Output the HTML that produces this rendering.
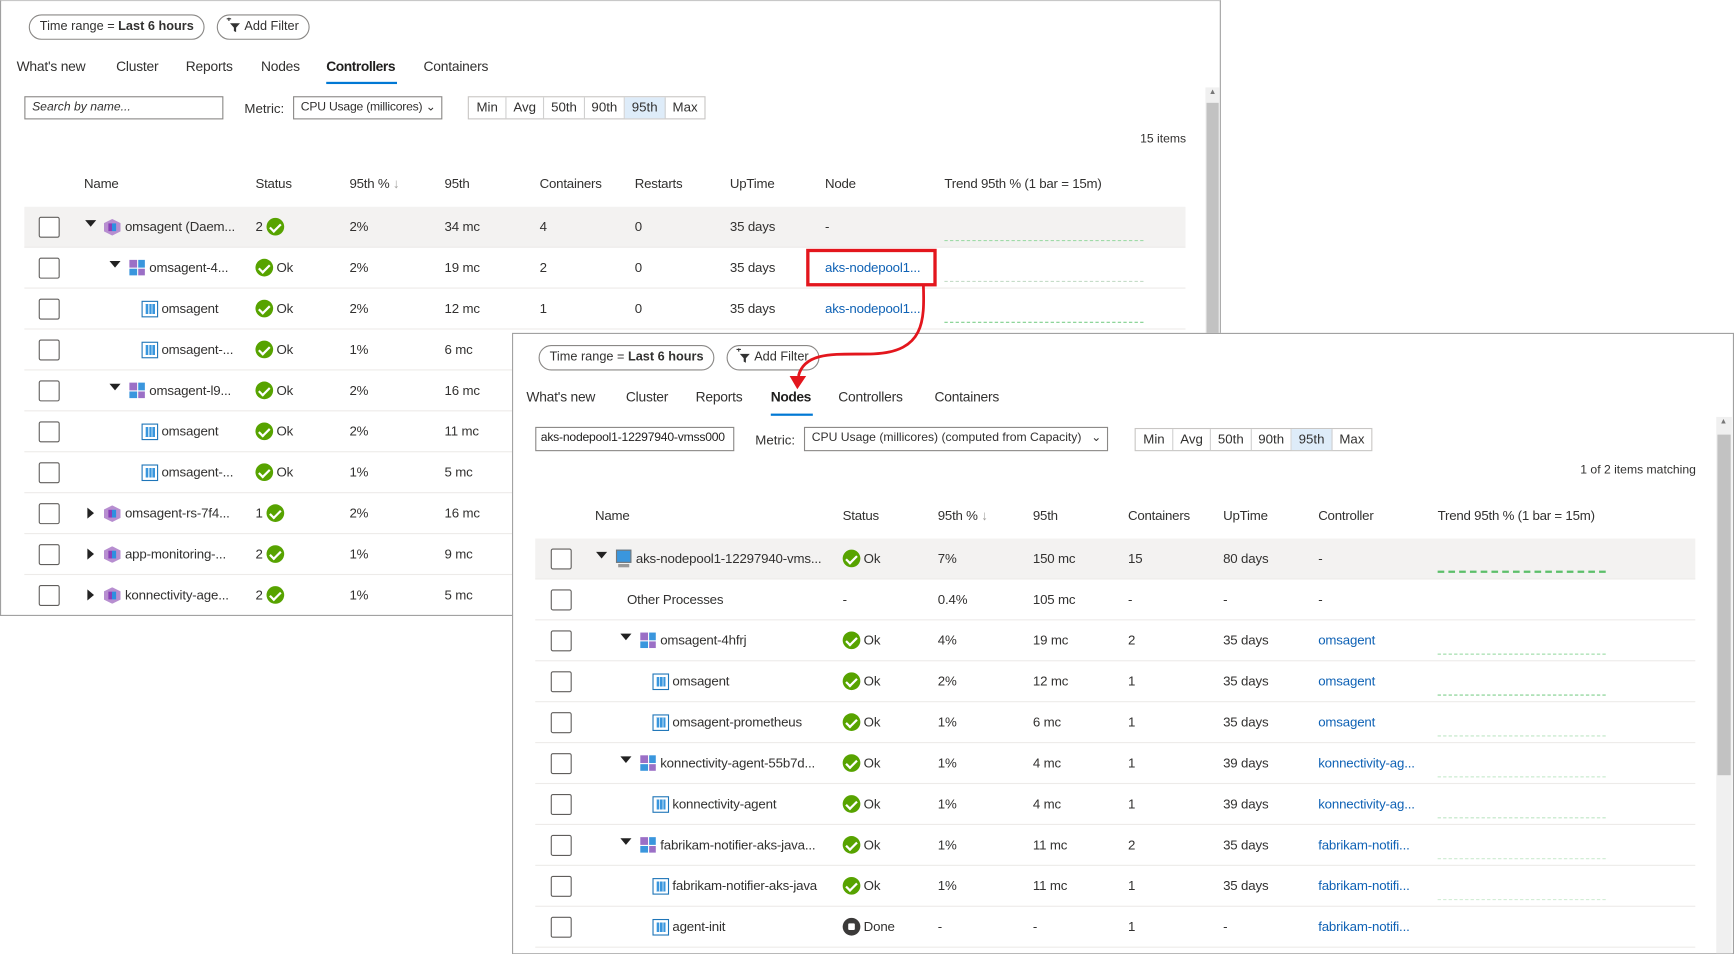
<!DOCTYPE html>
<html><head><meta charset="utf-8"><style>
*{box-sizing:border-box;margin:0;padding:0}
body{width:1734px;height:954px;background:#fff;overflow:hidden;font-family:"Liberation Sans",sans-serif;color:#323130;font-size:12px}
#w{position:absolute;left:0;top:0;width:1568px;height:863px;transform:scale(1.10587);transform-origin:0 0}
.p{position:absolute;background:#fff;border:1px solid #a0a0a0;overflow:hidden}
.a{position:absolute;white-space:nowrap}
.pill{position:absolute;height:23px;border:1px solid #8a8886;border-radius:12px;line-height:21px;font-size:11.5px;padding:0 9px}
.tab{position:absolute;font-size:12.5px;white-space:nowrap;letter-spacing:-0.2px}
.ul{position:absolute;height:2px;background:#0078d4}
.box{position:absolute;height:21px;border:1px solid #8a8886;font-size:11px;line-height:19px;padding:0 6px;white-space:nowrap;overflow:hidden}
.seg{position:absolute;height:21px;border:1px solid #c8c6c4;display:flex;font-size:12px}
.seg span{border-right:1px solid #d0d0d0;line-height:19px;text-align:center}
.seg span:last-child{border-right:none}
.hd{position:absolute;font-size:12px;font-weight:normal;color:#323130;letter-spacing:-0.2px}
.row{position:absolute;height:37px;border-bottom:1px solid #edebe9;letter-spacing:-0.15px}
.row .a{top:11px}
.cb{position:absolute;top:9px;width:19px;height:19px;border:1px solid #605e5c;border-radius:2px;background:#fff}
.tri{position:absolute;top:12px;width:0;height:0;border-left:5px solid transparent;border-right:5px solid transparent;border-top:6px solid #222}
.trir{position:absolute;top:8px;width:0;height:0;border-top:5px solid transparent;border-bottom:5px solid transparent;border-left:6px solid #222}
.ok{display:inline-block;width:16px;height:16px;border-radius:50%;background:#57a300;vertical-align:-4px;position:relative;margin-right:3px}
.ok:after{content:"";position:absolute;left:5px;top:2.5px;width:4px;height:8px;border:solid #fff;border-width:0 2px 2px 0;transform:rotate(45deg)}
.done{display:inline-block;width:16px;height:16px;border-radius:50%;background:#3b3a39;vertical-align:-4px;position:relative;margin-right:3px}
.done:after{content:"";position:absolute;left:5px;top:5px;width:6px;height:6px;background:#fff;border-radius:1px}
.ct{position:absolute;top:11px;width:15px;height:15px;background:#3a96dd;border:1px solid #1e75b8;background-image:repeating-linear-gradient(90deg,#3a96dd 0 2px,#bfe0f7 2px 3px);background-clip:content-box;padding:2px}
.rs{position:absolute;top:11px;width:14px;height:14px;display:grid;grid-template-columns:1fr 1fr;gap:1px}
.rs i{display:block}
.ds{position:absolute;top:11px;width:15px;height:15px;background:#b78ed0;clip-path:polygon(50% 0,100% 25%,100% 75%,50% 100%,0 75%,0 25%)}
.ds:after{content:"";position:absolute;left:4px;top:4px;width:7px;height:7px;background:linear-gradient(90deg,#8a3fb8 50%,#2d8fe0 50%)}
.tr{position:absolute;top:30px;height:0;border-top:1px dashed #9fdba8}
.trb{border-top:2px dashed #5cbf6a}
.lk{color:#0f62b5}
.sb{position:absolute;background:#f0f0f0}
.th{position:absolute;background:#c2c2c2}
.fi{display:inline-block;vertical-align:-3px;margin-right:3px}
</style></head><body><div id="w">

<!-- Panel 1 -->
<div class="p" style="left:0;top:0;width:1104px;height:557px;border-top-color:#c8c8c8">
 <div class="pill" style="left:25px;top:12px">Time range = <b>Last 6 hours</b></div>
 <div class="pill" style="left:195px;top:12px;padding-left:7px"><svg class="fi" width="14" height="14" viewBox="0 0 14 14"><path d="M1 1h4M3 -1v4" stroke="#333" stroke-width="1"/><path d="M4 5h9l-3.5 4v4l-2-1v-3z" fill="#333"/></svg>Add Filter</div>
 <div class="tab" style="left:14px;top:52px">What's new</div>
 <div class="tab" style="left:104px;top:52px">Cluster</div>
 <div class="tab" style="left:167px;top:52px">Reports</div>
 <div class="tab" style="left:235px;top:52px">Nodes</div>
 <div class="tab" style="left:294px;top:52px;font-weight:bold;color:#201f1e;letter-spacing:-0.4px">Controllers</div>
 <div class="ul" style="left:294px;top:73px;width:64px"></div>
 <div class="tab" style="left:382px;top:52px">Containers</div>
 <div class="box" style="left:21px;top:86px;width:180px;font-style:italic">Search by name...</div>
 <div class="a" style="left:220px;top:90px">Metric:</div>
 <div class="box" style="left:264px;top:86px;width:135px;letter-spacing:-0.2px">CPU Usage (millicores) <span style="position:absolute;right:5px">⌄</span></div>
 <div class="seg" style="left:422px;top:86px"><span style="width:34px">Min</span><span style="width:34px">Avg</span><span style="width:37px">50th</span><span style="width:36px">90th</span><span style="width:37px;background:#deecf9">95th</span><span style="width:35px">Max</span></div>
 <div class="a" style="left:1030px;top:119px;font-size:11px">15 items</div>
 <div class="hd" style="left:75px;top:158px">Name</div><div class="hd" style="left:230px;top:158px">Status</div><div class="hd" style="left:315px;top:158px">95th % <span style="color:#a19f9d">↓</span></div><div class="hd" style="left:401px;top:158px">95th</div><div class="hd" style="left:487px;top:158px">Containers</div><div class="hd" style="left:573px;top:158px">Restarts</div><div class="hd" style="left:659px;top:158px">UpTime</div><div class="hd" style="left:745px;top:158px">Node</div><div class="hd" style="left:853px;top:158px">Trend 95th % (1 bar = 15m)</div>

 <div class="row" style="left:21px;top:186px;width:1050px;background:#f3f2f1"><div class="cb" style="left:13px"></div><div class="tri" style="left:55px"></div><div class="ds" style="left:72px"></div><span class="a" style="left:91px">omsagent (Daem...</span><span class="a" style="left:209px;top:10px">2 <span class="ok"></span></span><span class="a" style="left:294px">2%</span><span class="a" style="left:380px">34 mc</span><span class="a" style="left:466px">4</span><span class="a" style="left:552px">0</span><span class="a" style="left:638px">35 days</span><span class="a" style="left:724px">-</span><div class="tr" style="left:832px;width:180px"></div></div>
 <div class="row" style="left:21px;top:223px;width:1050px"><div class="cb" style="left:13px"></div><div class="tri" style="left:77px"></div><div class="rs" style="left:95px"><i style="background:#9b6fc6"></i><i style="background:#3a96dd"></i><i style="background:#3a96dd"></i><i style="background:#9b6fc6"></i></div><span class="a" style="left:113px">omsagent-4...</span><span class="a" style="left:209px;top:10px"><span class="ok"></span>Ok</span><span class="a" style="left:294px">2%</span><span class="a" style="left:380px">19 mc</span><span class="a" style="left:466px">2</span><span class="a" style="left:552px">0</span><span class="a" style="left:638px">35 days</span><span class="a lk" style="left:724px">aks-nodepool1...</span><div class="tr" style="left:832px;width:180px;border-top-color:#c5dcc8"></div></div>
 <div class="row" style="left:21px;top:260px;width:1050px"><div class="cb" style="left:13px"></div><div class="ct" style="left:106px"></div><span class="a" style="left:124px">omsagent</span><span class="a" style="left:209px;top:10px"><span class="ok"></span>Ok</span><span class="a" style="left:294px">2%</span><span class="a" style="left:380px">12 mc</span><span class="a" style="left:466px">1</span><span class="a" style="left:552px">0</span><span class="a" style="left:638px">35 days</span><span class="a lk" style="left:724px">aks-nodepool1...</span><div class="tr" style="left:832px;width:180px;border-top-color:#7fcf8c"></div></div>
 <div class="row" style="left:21px;top:297px;width:1050px"><div class="cb" style="left:13px"></div><div class="ct" style="left:106px"></div><span class="a" style="left:124px">omsagent-...</span><span class="a" style="left:209px;top:10px"><span class="ok"></span>Ok</span><span class="a" style="left:294px">1%</span><span class="a" style="left:380px">6 mc</span></div>
 <div class="row" style="left:21px;top:334px;width:1050px"><div class="cb" style="left:13px"></div><div class="tri" style="left:77px"></div><div class="rs" style="left:95px"><i style="background:#9b6fc6"></i><i style="background:#3a96dd"></i><i style="background:#3a96dd"></i><i style="background:#9b6fc6"></i></div><span class="a" style="left:113px">omsagent-l9...</span><span class="a" style="left:209px;top:10px"><span class="ok"></span>Ok</span><span class="a" style="left:294px">2%</span><span class="a" style="left:380px">16 mc</span></div>
 <div class="row" style="left:21px;top:371px;width:1050px"><div class="cb" style="left:13px"></div><div class="ct" style="left:106px"></div><span class="a" style="left:124px">omsagent</span><span class="a" style="left:209px;top:10px"><span class="ok"></span>Ok</span><span class="a" style="left:294px">2%</span><span class="a" style="left:380px">11 mc</span></div>
 <div class="row" style="left:21px;top:408px;width:1050px"><div class="cb" style="left:13px"></div><div class="ct" style="left:106px"></div><span class="a" style="left:124px">omsagent-...</span><span class="a" style="left:209px;top:10px"><span class="ok"></span>Ok</span><span class="a" style="left:294px">1%</span><span class="a" style="left:380px">5 mc</span></div>
 <div class="row" style="left:21px;top:445px;width:1050px"><div class="cb" style="left:13px"></div><div class="trir" style="left:57px;top:13px"></div><div class="ds" style="left:72px"></div><span class="a" style="left:91px">omsagent-rs-7f4...</span><span class="a" style="left:209px;top:10px">1 <span class="ok"></span></span><span class="a" style="left:294px">2%</span><span class="a" style="left:380px">16 mc</span></div>
 <div class="row" style="left:21px;top:482px;width:1050px"><div class="cb" style="left:13px"></div><div class="trir" style="left:57px;top:13px"></div><div class="ds" style="left:72px"></div><span class="a" style="left:91px">app-monitoring-...</span><span class="a" style="left:209px;top:10px">2 <span class="ok"></span></span><span class="a" style="left:294px">1%</span><span class="a" style="left:380px">9 mc</span></div>
 <div class="row" style="left:21px;top:519px;width:1050px;border:none"><div class="cb" style="left:13px"></div><div class="trir" style="left:57px;top:13px"></div><div class="ds" style="left:72px"></div><span class="a" style="left:91px">konnectivity-age...</span><span class="a" style="left:209px;top:10px">2 <span class="ok"></span></span><span class="a" style="left:294px">1%</span><span class="a" style="left:380px">5 mc</span></div>
 <div class="sb" style="left:1089px;top:78px;width:13px;height:480px"></div>
 <div class="th" style="left:1090px;top:92px;width:11px;height:466px"></div>
 <div class="a" style="left:1092px;top:79px;font-size:7px;color:#777">▲</div>
</div>
<div style="position:absolute;left:729px;top:225px;width:118px;height:34px;border:3px solid #e3161d"></div>

<!-- Panel 2 -->
<div class="p" style="left:463px;top:301px;width:1105px;height:562px">
 <div class="pill" style="left:23px;top:10px">Time range = <b>Last 6 hours</b></div>
 <div class="pill" style="left:193px;top:10px;padding-left:7px"><svg class="fi" width="14" height="14" viewBox="0 0 14 14"><path d="M1 1h4M3 -1v4" stroke="#333" stroke-width="1"/><path d="M4 5h9l-3.5 4v4l-2-1v-3z" fill="#333"/></svg>Add Filter</div>
 <div class="tab" style="left:12px;top:50px">What's new</div>
 <div class="tab" style="left:102px;top:50px">Cluster</div>
 <div class="tab" style="left:165px;top:50px">Reports</div>
 <div class="tab" style="left:233px;top:50px;font-weight:bold;color:#201f1e;letter-spacing:-0.4px">Nodes</div>
 <div class="ul" style="left:233px;top:72px;width:38px"></div>
 <div class="tab" style="left:294px;top:50px">Controllers</div>
 <div class="tab" style="left:381px;top:50px">Containers</div>
 <div class="box" style="left:20px;top:84px;width:180px;height:22px;color:#201f1e;letter-spacing:-0.2px;padding:0 4px">aks-nodepool1-12297940-vmss000</div>
 <div class="a" style="left:219px;top:89px">Metric:</div>
 <div class="box" style="left:263px;top:84px;width:275px;height:22px">CPU Usage (millicores) (computed from Capacity) <span style="position:absolute;right:5px">⌄</span></div>
 <div class="seg" style="left:562px;top:85px"><span style="width:34px">Min</span><span style="width:34px">Avg</span><span style="width:37px">50th</span><span style="width:36px">90th</span><span style="width:37px;background:#deecf9">95th</span><span style="width:35px">Max</span></div>
 <div class="a" style="left:965px;top:117px;font-size:11px">1 of 2 items matching</div>
 <div class="hd" style="left:74px;top:157px">Name</div><div class="hd" style="left:298px;top:157px">Status</div><div class="hd" style="left:384px;top:157px">95th % <span style="color:#a19f9d">↓</span></div><div class="hd" style="left:470px;top:157px">95th</div><div class="hd" style="left:556px;top:157px">Containers</div><div class="hd" style="left:642px;top:157px">UpTime</div><div class="hd" style="left:728px;top:157px">Controller</div><div class="hd" style="left:836px;top:157px">Trend 95th % (1 bar = 15m)</div>

 <div class="row" style="left:20px;top:185px;width:1049px;background:#f3f2f1"><div class="cb" style="left:14px"></div><div class="tri" style="left:55px"></div><div class="a" style="left:73px;top:10px;width:14px;height:12px;background:#3a96dd;border:1px solid #777"></div><div class="a" style="left:75px;top:23px;width:10px;height:3px;background:#999"></div><span class="a" style="left:91px">aks-nodepool1-12297940-vms...</span><span class="a" style="left:278px;top:10px"><span class="ok"></span>Ok</span><span class="a" style="left:364px">7%</span><span class="a" style="left:450px">150 mc</span><span class="a" style="left:536px">15</span><span class="a" style="left:622px">80 days</span><span class="a" style="left:708px">-</span><div class="tr trb" style="left:816px;width:152px;top:29px"></div></div>
 <div class="row" style="left:20px;top:222px;width:1049px"><div class="cb" style="left:14px"></div><span class="a" style="left:83px">Other Processes</span><span class="a" style="left:278px">-</span><span class="a" style="left:364px">0.4%</span><span class="a" style="left:450px">105 mc</span><span class="a" style="left:536px">-</span><span class="a" style="left:622px">-</span><span class="a" style="left:708px">-</span></div>
 <div class="row" style="left:20px;top:259px;width:1049px"><div class="cb" style="left:14px"></div><div class="tri" style="left:77px"></div><div class="rs" style="left:95px"><i style="background:#9b6fc6"></i><i style="background:#3a96dd"></i><i style="background:#3a96dd"></i><i style="background:#9b6fc6"></i></div><span class="a" style="left:113px">omsagent-4hfrj</span><span class="a" style="left:278px;top:10px"><span class="ok"></span>Ok</span><span class="a" style="left:364px">4%</span><span class="a" style="left:450px">19 mc</span><span class="a" style="left:536px">2</span><span class="a" style="left:622px">35 days</span><span class="a lk" style="left:708px">omsagent</span><div class="tr" style="left:816px;width:152px;border-top-color:#8fd69a"></div></div>
 <div class="row" style="left:20px;top:296px;width:1049px"><div class="cb" style="left:14px"></div><div class="ct" style="left:106px"></div><span class="a" style="left:124px">omsagent</span><span class="a" style="left:278px;top:10px"><span class="ok"></span>Ok</span><span class="a" style="left:364px">2%</span><span class="a" style="left:450px">12 mc</span><span class="a" style="left:536px">1</span><span class="a" style="left:622px">35 days</span><span class="a lk" style="left:708px">omsagent</span><div class="tr" style="left:816px;width:152px;border-top-color:#7fcf8c"></div></div>
 <div class="row" style="left:20px;top:333px;width:1049px"><div class="cb" style="left:14px"></div><div class="ct" style="left:106px"></div><span class="a" style="left:124px">omsagent-prometheus</span><span class="a" style="left:278px;top:10px"><span class="ok"></span>Ok</span><span class="a" style="left:364px">1%</span><span class="a" style="left:450px">6 mc</span><span class="a" style="left:536px">1</span><span class="a" style="left:622px">35 days</span><span class="a lk" style="left:708px">omsagent</span><div class="tr" style="left:816px;width:152px;border-top-color:#bfe6c5"></div></div>
 <div class="row" style="left:20px;top:370px;width:1049px"><div class="cb" style="left:14px"></div><div class="tri" style="left:77px"></div><div class="rs" style="left:95px"><i style="background:#9b6fc6"></i><i style="background:#3a96dd"></i><i style="background:#3a96dd"></i><i style="background:#9b6fc6"></i></div><span class="a" style="left:113px">konnectivity-agent-55b7d...</span><span class="a" style="left:278px;top:10px"><span class="ok"></span>Ok</span><span class="a" style="left:364px">1%</span><span class="a" style="left:450px">4 mc</span><span class="a" style="left:536px">1</span><span class="a" style="left:622px">39 days</span><span class="a lk" style="left:708px">konnectivity-ag...</span><div class="tr" style="left:816px;width:152px;border-top-color:#bfe6c5"></div></div>
 <div class="row" style="left:20px;top:407px;width:1049px"><div class="cb" style="left:14px"></div><div class="ct" style="left:106px"></div><span class="a" style="left:124px">konnectivity-agent</span><span class="a" style="left:278px;top:10px"><span class="ok"></span>Ok</span><span class="a" style="left:364px">1%</span><span class="a" style="left:450px">4 mc</span><span class="a" style="left:536px">1</span><span class="a" style="left:622px">39 days</span><span class="a lk" style="left:708px">konnectivity-ag...</span><div class="tr" style="left:816px;width:152px;border-top-color:#bfe6c5"></div></div>
 <div class="row" style="left:20px;top:444px;width:1049px"><div class="cb" style="left:14px"></div><div class="tri" style="left:77px"></div><div class="rs" style="left:95px"><i style="background:#9b6fc6"></i><i style="background:#3a96dd"></i><i style="background:#3a96dd"></i><i style="background:#9b6fc6"></i></div><span class="a" style="left:113px">fabrikam-notifier-aks-java...</span><span class="a" style="left:278px;top:10px"><span class="ok"></span>Ok</span><span class="a" style="left:364px">1%</span><span class="a" style="left:450px">11 mc</span><span class="a" style="left:536px">2</span><span class="a" style="left:622px">35 days</span><span class="a lk" style="left:708px">fabrikam-notifi...</span><div class="tr" style="left:816px;width:152px;border-top-color:#cdebd1"></div></div>
 <div class="row" style="left:20px;top:481px;width:1049px"><div class="cb" style="left:14px"></div><div class="ct" style="left:106px"></div><span class="a" style="left:124px">fabrikam-notifier-aks-java</span><span class="a" style="left:278px;top:10px"><span class="ok"></span>Ok</span><span class="a" style="left:364px">1%</span><span class="a" style="left:450px">11 mc</span><span class="a" style="left:536px">1</span><span class="a" style="left:622px">35 days</span><span class="a lk" style="left:708px">fabrikam-notifi...</span><div class="tr" style="left:816px;width:152px;border-top-color:#cdebd1"></div></div>
 <div class="row" style="left:20px;top:518px;width:1049px"><div class="cb" style="left:14px"></div><div class="ct" style="left:106px"></div><span class="a" style="left:124px">agent-init</span><span class="a" style="left:278px;top:10px"><span class="done"></span>Done</span><span class="a" style="left:364px">-</span><span class="a" style="left:450px">-</span><span class="a" style="left:536px">1</span><span class="a" style="left:622px">-</span><span class="a lk" style="left:708px">fabrikam-notifi...</span></div>
 <div class="sb" style="left:1088px;top:75px;width:14px;height:490px"></div>
 <div class="th" style="left:1089px;top:91px;width:12px;height:308px"></div>
 <div class="a" style="left:1091px;top:76px;font-size:7px;color:#777">▲</div>
</div>

<!-- Arrow -->
<svg style="position:absolute;left:0;top:0" width="1568" height="863">
 <path d="M835 258 C836 290 836 318 790 320 C760 321 728 316 722 340" fill="none" stroke="#e3161d" stroke-width="2.5"/>
 <polygon points="714,340 729,340 721,352" fill="#e3161d"/>
</svg>
</div></body></html>
